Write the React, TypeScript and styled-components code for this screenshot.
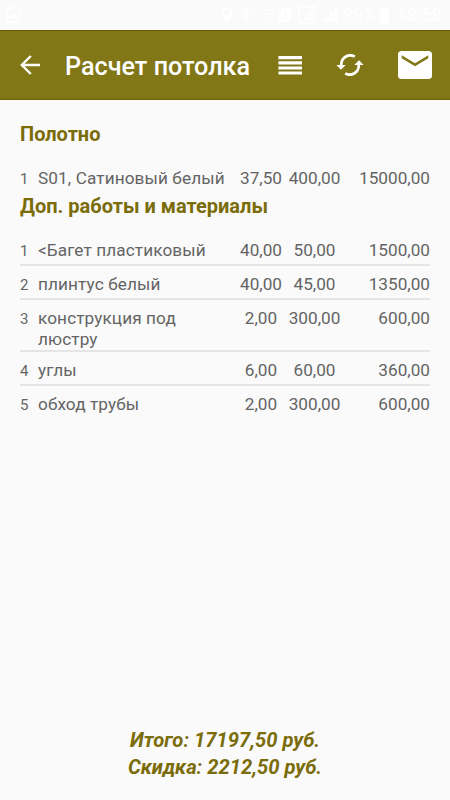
import React from "react";
import styled, { createGlobalStyle } from "styled-components";

const GlobalStyle = createGlobalStyle`
  * { box-sizing: border-box; }
  body { margin: 0; background: #fafafa; font-family: Roboto, sans-serif; }
`;

const Screen = styled.div`
  display: flex;
  flex-direction: column;
  width: 450px;
  height: 800px;
  overflow: hidden;
  background: #fafafa;
`;

const StatusBar = styled.div`
  display: flex;
  align-items: center;
  flex: none;
  height: 30px;
  padding: 0 8px 0 6px;
  color: #fff;
  font-size: 18.5px;
  line-height: 30px;
`;

const StatusIcon = styled.svg<{ $gap: number }>`
  flex: none;
  margin-right: ${(p) => p.$gap}px;
`;

const StatusSpacer = styled.div`
  flex: 1;
`;

const Clock = styled.span`
  margin-left: 5px;
`;

const AppBar = styled.header`
  display: flex;
  align-items: center;
  flex: none;
  height: 70px;
  padding: 0 18px 0 20px;
  background: #827717;
  border-top: 1px solid #6b5c05;
  border-bottom: 1px solid #6f610a;
  color: #fff;
`;

const Title = styled.h1`
  flex: 1;
  margin: 3px 0 0 24px;
  font-size: 25.2px;
  font-weight: 500;
  line-height: 34px;
  white-space: nowrap;
`;

const IconButton = styled.button<{ $gap?: number }>`
  display: flex;
  flex: none;
  margin: 0 0 0 ${(p) => p.$gap ?? 0}px;
  padding: 0;
  border: 0;
  background: none;
  color: inherit;
`;

const Content = styled.main`
  flex: 1;
  padding: 18px 20px 0;
`;

const SectionTitle = styled.h2`
  height: 42px;
  margin: 0;
  padding-top: 3px;
  color: #7a6c09;
  font-size: 20px;
  font-weight: 700;
  line-height: 27px;
`;

const Row = styled.div<{ $divided: boolean }>`
  display: grid;
  grid-template-columns: 18px 196px 54px 53px 89px;
  min-height: ${(p) => (p.$divided ? 34 : 30)}px;
  padding-top: 8px;
  border-bottom: ${(p) => (p.$divided ? "2px solid #e5e5e5" : "0")};
  color: #646464;
  font-size: 17.2px;
  line-height: 21px;
`;

const Index = styled.span`
  font-size: 15px;
  line-height: 22px;
`;

const Name = styled.span`
  letter-spacing: 0.1px;
`;

const Value = styled.span<{ $align: "center" | "right" }>`
  text-align: ${(p) => p.$align};
`;

const Totals = styled.footer`
  flex: none;
  height: 73px;
  color: #7a6c09;
  font-size: 20.2px;
  font-style: italic;
  font-weight: 700;
  line-height: 27px;
  text-align: center;
`;

type Item = { name: string; qty: string; price: string; total: string };

const canvas: Item[] = [
  { name: "S01, Сатиновый белый", qty: "37,50", price: "400,00", total: "15000,00" },
];

const extras: Item[] = [
  { name: "<Багет пластиковый", qty: "40,00", price: "50,00", total: "1500,00" },
  { name: "плинтус белый", qty: "40,00", price: "45,00", total: "1350,00" },
  { name: "конструкция под люстру", qty: "2,00", price: "300,00", total: "600,00" },
  { name: "углы", qty: "6,00", price: "60,00", total: "360,00" },
  { name: "обход трубы", qty: "2,00", price: "300,00", total: "600,00" },
];

function Section({ title, items }: { title: string; items: Item[] }) {
  return (
    <section>
      <SectionTitle>{title}</SectionTitle>
      {items.map((item, i) => (
        <Row key={item.name} $divided={i < items.length - 1}>
          <Index>{i + 1}</Index>
          <Name>{item.name}</Name>
          <Value $align="center">{item.qty}</Value>
          <Value $align="center">{item.price}</Value>
          <Value $align="right">{item.total}</Value>
        </Row>
      ))}
    </section>
  );
}

function Status() {
  return (
    <StatusBar>
      <StatusIcon $gap={0} width="15" height="16" viewBox="0 0 15 16" fill="none" stroke="#fff">
        <path d="M1 1h13v14H1z" strokeWidth="1.3" />
        <path d="M4 11V9l3-3 2 2 1-1 2 3v1z" fill="#fff" stroke="none" />
      </StatusIcon>
      <StatusSpacer />
      <StatusIcon $gap={5} width="12" height="16" viewBox="0 0 12 16" fill="#fff">
        <path fillRule="evenodd" d="M6 0a5.8 5.8 0 0 0-5.8 5.8C.2 10 6 15.5 6 15.5s5.8-5.5 5.8-9.700A5.8 5.8 0 0 0 6 0zm0 3a2.8 2.8 0 1 1 0 5.6A2.8 2.8 0 0 1 6 3z" />
      </StatusIcon>
      <StatusIcon $gap={10} width="15" height="16" viewBox="0 0 15 16" fill="none" stroke="#fff" strokeWidth="1.4">
        <path d="M4 4.5l7 7L7.5 15V1L11 4.5l-7 7M1 8h1M13 8h1" />
      </StatusIcon>
      <StatusIcon $gap={6} width="10" height="16" viewBox="0 0 10 16" fill="none" stroke="#fff" strokeWidth="1.5">
        <path d="M0 5q5-5 10 0M2 8q3-3 6 0" />
        <circle cx="5" cy="10.5" r="1.3" fill="#fff" stroke="none" />
      </StatusIcon>
      <StatusIcon $gap={7} width="12" height="16" viewBox="0 0 12 16">
        <path d="M4 1h8v14H0V5z" fill="#fff" />
        <path d="M4.5 6L6.500 5v8" fill="none" stroke="#fafafa" strokeWidth="1.5" />
      </StatusIcon>
      <StatusIcon $gap={6} width="18" height="18" viewBox="0 0 18 18">
        <path d="M1 1h16v16H1z" fill="none" stroke="#fff" strokeWidth="1.3" />
        <path d="M3 15v-2h2v2zM6 15v-4h2v4zM9 15V8h2v7zM12 15V4h3v11z" fill="#fff" />
      </StatusIcon>
      <StatusIcon $gap={6} width="15" height="16" viewBox="0 0 15 16" fill="#fff">
        <path d="M0 15v-2h3v2zM4 15v-5h3v5zM8 15V6h3v9zM12 15V1h3v14z" />
      </StatusIcon>
      <span>99%</span>
      <StatusIcon $gap={0} width="14" height="16" viewBox="0 0 14 16" fill="#fff">
        <path d="M5 0h5v2h2v14H3V2h2z" />
      </StatusIcon>
      <Clock>18:58</Clock>
    </StatusBar>
  );
}

export default function App() {
  return (
    <Screen>
      <GlobalStyle />
      <Status />
      <AppBar>
        <IconButton aria-label="Назад">
          <svg width="21" height="20" viewBox="0 0 21 20" fill="none" stroke="#fff" strokeWidth="2.4">
            <path d="M10.8 1L1.8 10l9 9M2 10h18" />
          </svg>
        </IconButton>
        <Title>Расчет потолка</Title>
        <IconButton aria-label="Список">
          <svg width="24" height="19" viewBox="0 0 24 19" fill="#fff">
            <path d="M.4 0H24v3.200H.4zM.4 5.200H24v3.200H.4zM.4 10.400H24v3.200H.4zM.4 15.500H24v3H.4z" />
          </svg>
        </IconButton>
        <IconButton aria-label="Обновить" $gap={34}>
          <svg width="28" height="22" viewBox="0 0 28 22">
            <path d="M18.8 2.600A9 9 0 0 0 5.300 11M9.200 19.400A9 9 0 0 0 22.700 11" fill="none" stroke="#fff" strokeWidth="2.7" />
            <path d="M.4 11h9.300L5 15.800zM18.300 11h9.300L23 6.200z" fill="#fff" />
          </svg>
        </IconButton>
        <IconButton aria-label="Отправить" $gap={34}>
          <svg width="34" height="28" viewBox="0 0 34 28">
            <rect width="34" height="28" rx="3.5" fill="#fff" />
            <path d="M3.700 4.300L17 12.300l13.300-8v2.900L17 15.300 3.700 7.200z" fill="#827717" />
          </svg>
        </IconButton>
      </AppBar>
      <Content>
        <Section title="Полотно" items={canvas} />
        <Section title="Доп. работы и материалы" items={extras} />
      </Content>
      <Totals>
        <div>Итого: 17197,50 руб.</div>
        <div>Скидка: 2212,50 руб.</div>
      </Totals>
    </Screen>
  );
}
